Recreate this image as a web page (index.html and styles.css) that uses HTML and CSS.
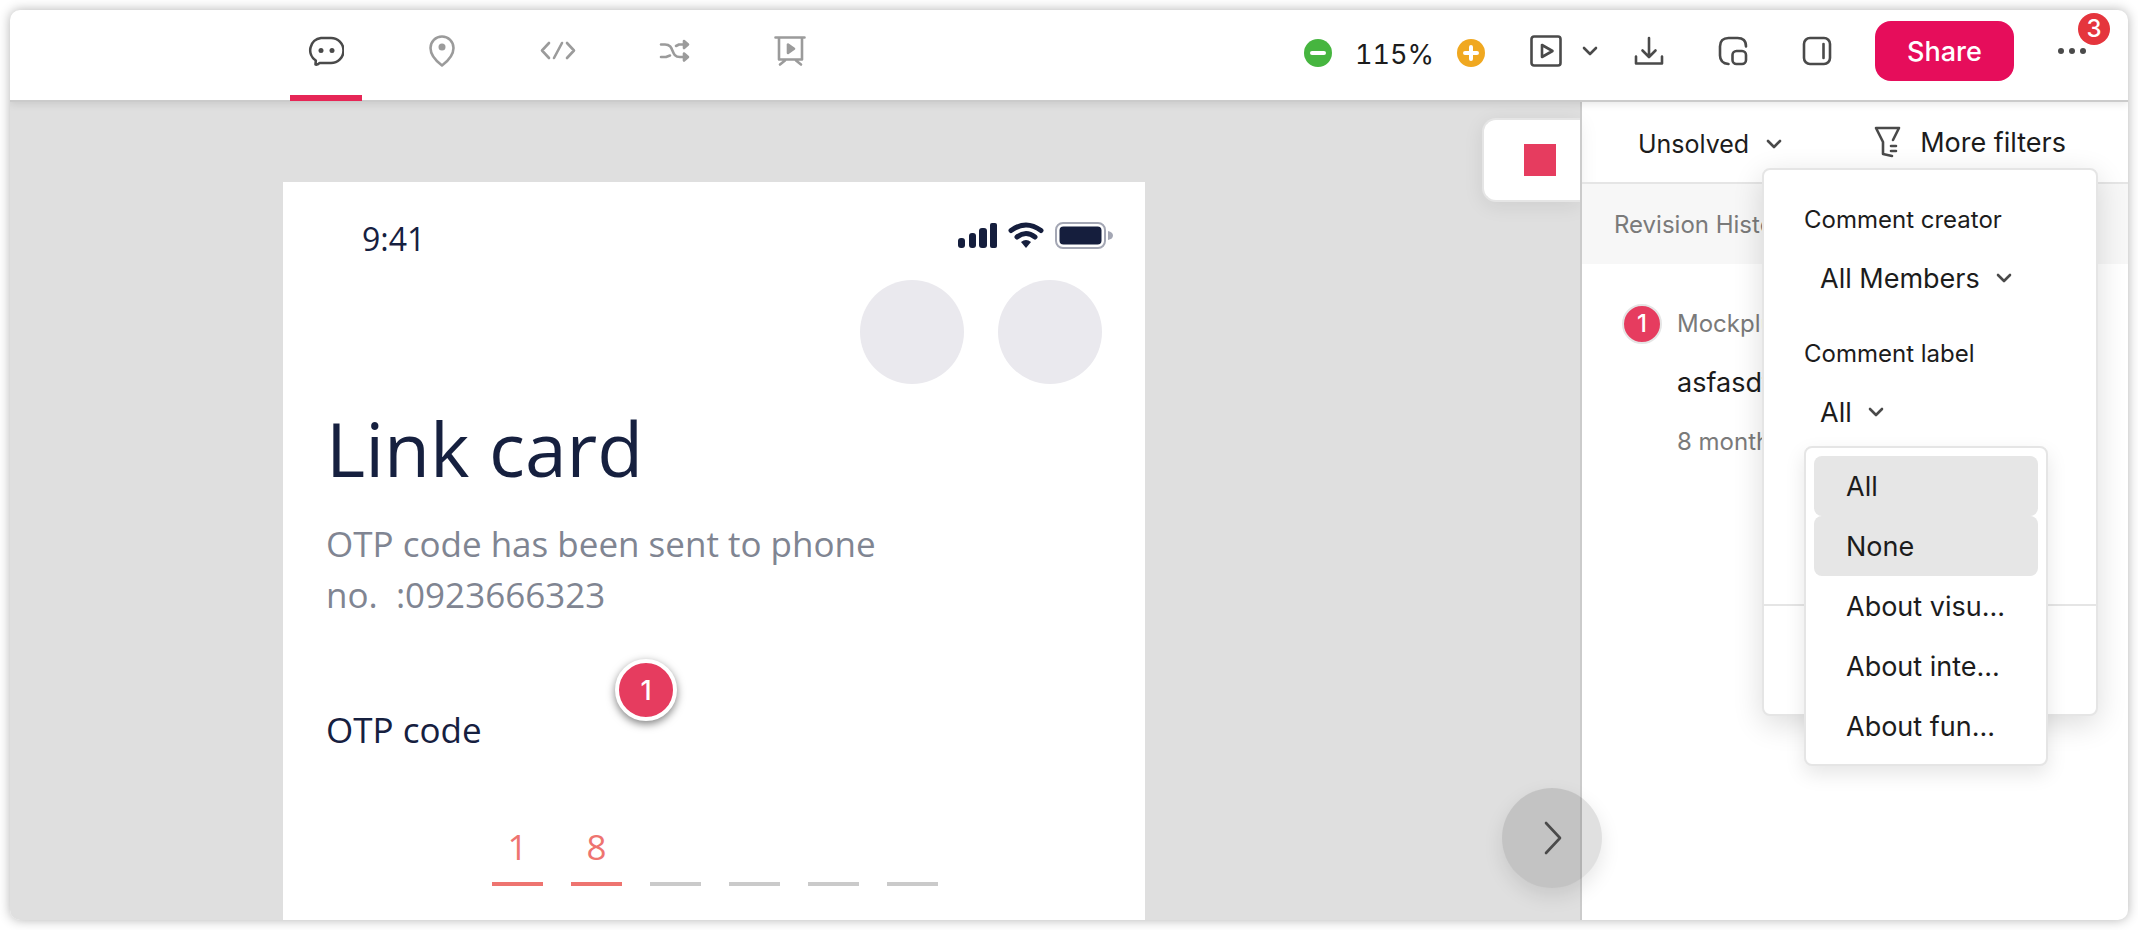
FILE: index.html
```html
<!DOCTYPE html>
<html lang="en">
<head>
  <meta charset="UTF-8" />
  <meta name="viewport" content="width=device-width, initial-scale=1.0"/>
  <title>Link card - Comments</title>
  <link rel="stylesheet" href="styles.css">
</head>
<body>
  <div class="window">
    <header class="toolbar">
      <nav class="tabs">
        <button class="tab active" aria-label="Comments">
          <svg class="icon" viewBox="0 0 36 36">
            <path d="M13 5h10a12.300 12.300 0 0 1 0 25H11.500q-1.500 2-4 1.500l.3-4A12.300 12.300 0 0 1 13 5z"/>
            <circle class="dot" cx="13" cy="17.500" r="2.500"/>
            <circle class="dot" cx="24" cy="17.500" r="2.500"/>
          </svg>
        </button>
        <button class="tab" aria-label="Pins">
          <svg class="icon" viewBox="0 0 36 36">
            <path d="M18 32.500C12 28 6.500 22 6.500 15a11.500 11.500 0 0 1 23 0C29.500 22 24 28 18 32.500z"/>
            <circle class="dot" cx="18" cy="14" r="3.500"/>
          </svg>
        </button>
        <button class="tab" aria-label="Code">
          <svg class="icon" viewBox="0 0 36 36">
            <path d="M9 10l-7 7.500L9 25M27 10l7 7.500-7 7.500M22 10l-8 15"/>
          </svg>
        </button>
        <button class="tab" aria-label="Flow">
          <svg class="icon" viewBox="0 0 36 36">
            <path d="M5 11.500h4c10 0 5 12.500 15 12.500h6M5 24h5l4-1.500M20 13l3-1.500h7"/>
            <path class="solid" d="M28 8l4 3.500-4 3.500zM28 20.500l4 3.500-4 3.500z"/>
          </svg>
        </button>
        <button class="tab" aria-label="Presentation">
          <svg class="icon" viewBox="0 0 36 36">
            <path d="M3.500 4.500h29M7 5v21.500h23V5M13 27.500l-5 4M24 27.500l5 4"/>
            <path class="solid" d="M16 11.500v8.500l6-4.200z"/>
          </svg>
        </button>
      </nav>

      <div class="zoom">
        <button class="zoom-btn zoom-out" aria-label="Zoom out">
          <svg viewBox="0 0 28 28"><path d="M8 14h12"/></svg>
        </button>
        <span class="zoom-value">115%</span>
        <button class="zoom-btn zoom-in" aria-label="Zoom in">
          <svg viewBox="0 0 28 28"><path d="M8 14h12M14 8v12"/></svg>
        </button>
      </div>

      <div class="actions">
        <div class="play">
          <button class="icon-btn" aria-label="Preview">
            <svg viewBox="0 0 32 32">
              <rect x="1.500" y="1.500" width="29" height="29" rx="2.500"/>
              <path d="M12 10v12l10.500-6z"/>
            </svg>
          </button>
          <button class="chevron-btn" aria-label="Preview options">
            <svg class="chevron" viewBox="0 0 16 16"><path d="M2 5l6 6 6-6"/></svg>
          </button>
        </div>
        <button class="icon-btn" aria-label="Download">
          <svg viewBox="0 0 32 32"><path d="M16 3v18.500M9.500 15.500l6.500 6.500 6.500-6.500M3 21.500v7h26v-7"/></svg>
        </button>
        <button class="icon-btn" aria-label="Floating window">
          <svg viewBox="0 0 32 32">
            <path d="M29 11.500c0-6-3-8.500-8.500-8.500h-9C6 3 3 6 3 11.500v9c0 4.500 2.500 8 8.500 8.500"/>
            <rect x="15.500" y="16" width="13.500" height="13" rx="4"/>
          </svg>
        </button>
        <button class="icon-btn" aria-label="Side panel">
          <svg viewBox="0 0 32 32">
            <rect x="3" y="3" width="26" height="26" rx="6"/>
            <path d="M22.500 9v14"/>
          </svg>
        </button>
      </div>

      <button class="share">Share</button>

      <button class="icon-btn more" aria-label="More">
        <svg viewBox="0 0 32 32">
          <circle class="dot" cx="5" cy="16" r="3"/>
          <circle class="dot" cx="16" cy="16" r="3"/>
          <circle class="dot" cx="27" cy="16" r="3"/>
        </svg>
        <span class="badge">3</span>
      </button>
    </header>

    <div class="workspace">
      <main class="canvas">
        <section class="phone">
          <div class="status-bar">
            <span>9:41</span>
            <svg class="status-icons" viewBox="0 0 156 28">
              <rect x="1" y="17" width="7" height="10" rx="3"/>
              <rect x="12" y="12" width="7" height="15" rx="3"/>
              <rect x="22" y="7" width="8" height="20" rx="3"/>
              <rect x="33" y="2" width="7" height="25" rx="2"/>
              <path class="wave" d="M54 9.500q15-11 30 0M60 16q9-7 18 0"/>
              <path d="M64 21q5-4 10 0l-5 6z"/>
              <rect class="battery" x="99" y="2" width="49" height="25" rx="7"/>
              <rect x="102.500" y="5.500" width="42" height="18" rx="4"/>
              <path class="nub" d="M151 10q5 1 5 4.500t-5 4.500z"/>
            </svg>
          </div>
          <div class="avatars">
            <span class="avatar"></span>
            <span class="avatar"></span>
          </div>
          <h1>Link card</h1>
          <p class="hint">OTP code has been sent to phone<br>no.&nbsp; :0923666323</p>
          <p class="field-name">OTP code</p>
          <div class="otp">
            <input class="filled" aria-label="Digit 1" value="1">
            <input class="filled" aria-label="Digit 2" value="8">
            <input aria-label="Digit 3">
            <input aria-label="Digit 4">
            <input aria-label="Digit 5">
            <input aria-label="Digit 6">
          </div>
          <button class="marker">1</button>
        </section>
        <div class="color-tag"><span class="swatch"></span></div>
        <button class="collapse" aria-label="Collapse panel">
          <svg viewBox="0 0 32 36"><path d="M10 3l14 15-14 15"/></svg>
        </button>
      </main>

      <aside class="panel">
        <div class="panel-head">
          <label class="picker status">
            <select aria-label="Status"><option>Unsolved</option></select>
            <svg class="chevron" viewBox="0 0 16 16"><path d="M2 5l6 6 6-6"/></svg>
          </label>
          <button class="more-filters">
            <svg viewBox="0 0 28 32">
              <path d="M19 14l6-12H2l7 14v12l9 2M17 20h5M17 25h5"/>
            </svg>
            More filters
          </button>
        </div>
        <div class="revision">Revision History</div>
        <article class="comment">
          <span class="pin">1</span>
          <div class="comment-text">
            <p class="author">Mockplus</p>
            <p class="message">asfasdf</p>
            <p class="date">8 months ago</p>
          </div>
        </article>

        <div class="filters">
          <div class="filters-body">
            <label class="filter-name" for="creator">Comment creator</label>
            <div class="picker">
              <select id="creator"><option>All Members</option></select>
              <svg class="chevron" viewBox="0 0 16 16"><path d="M2 5l6 6 6-6"/></svg>
            </div>
            <label class="filter-name" for="label">Comment label</label>
            <div class="picker">
              <button id="label" class="picker-btn" aria-haspopup="listbox" aria-expanded="true">All</button>
              <svg class="chevron" viewBox="0 0 16 16"><path d="M2 5l6 6 6-6"/></svg>
              <ul class="menu" role="listbox">
                <li class="selected" role="option">All</li>
                <li class="selected" role="option">None</li>
                <li role="option">About visu...</li>
                <li role="option">About inte...</li>
                <li role="option">About fun...</li>
              </ul>
            </div>
          </div>
          <div class="filters-footer"></div>
        </div>
      </aside>
    </div>
  </div>
</body>
</html>
```
FILE: styles.css
```css
:root {
  --accent: #e60d5b;
  --pin: #e63c5f;
  --text: #1c1c1c;
  --muted: #7a7a7a;
  --icon: #4a4a4a;
  --icon-muted: #9b9b9b;
  --line: #e5e5e5;
  --line-strong: #cbcbcb;
  --navy: #16203f;
  --coral: #ee7470;
}

* {
  margin: 0;
  padding: 0;
  box-sizing: border-box;
}

body {
  font-family: Inter, "Liberation Sans", sans-serif;
  font-size: 24px;
  color: var(--text);
  background: #fff;
  height: 100vh;
  padding: 10px;
}

button,
select,
input {
  font: inherit;
  color: inherit;
  background: none;
  border: none;
  outline: none;
}

button,
select {
  cursor: pointer;
}

svg {
  display: block;
  fill: none;
  stroke: var(--icon);
  stroke-width: 2.6;
  stroke-linecap: round;
  stroke-linejoin: round;
}

.window {
  height: 100%;
  display: flex;
  flex-direction: column;
  background: #fff;
  border-radius: 10px;
  box-shadow: 0 0 12px rgba(0, 0, 0, 0.3);
  overflow: hidden;
}

/* Toolbar */
.toolbar {
  position: relative;
  z-index: 2;
  height: 92px;
  flex: none;
  display: flex;
  align-items: center;
  padding: 0 40px 8px 280px;
  border-bottom: 2px solid var(--line-strong);
  box-shadow: 0 2px 8px rgba(0, 0, 0, 0.1);
}

.tabs {
  display: flex;
  gap: 44px;
}

.tab {
  position: relative;
  width: 72px;
  height: 82px;
  display: flex;
  align-items: center;
  justify-content: center;
}

.icon {
  width: 36px;
  height: 36px;
  stroke: var(--icon-muted);
}

.icon .dot,
.icon .solid {
  fill: var(--icon-muted);
}

.icon .dot {
  stroke: none;
}

.tab.active .icon {
  stroke: var(--icon);
}

.tab.active .dot {
  fill: var(--icon);
}

.tab.active::after {
  content: "";
  position: absolute;
  left: 0;
  right: 0;
  bottom: -9px;
  height: 6px;
  background: #e62656;
}

.zoom {
  display: flex;
  align-items: center;
  gap: 23px;
  margin-left: auto;
  padding-top: 4px;
}

.zoom-btn {
  width: 28px;
  height: 28px;
  border-radius: 50%;
}

.zoom-btn svg {
  stroke: #fff;
  stroke-width: 4;
}

.zoom-out {
  background: #46b53f;
}

.zoom-in {
  background: #f0a820;
}

.zoom-value {
  font-size: 27px;
  font-variant-numeric: tabular-nums;
  padding-top: 2px;
}

.actions {
  display: flex;
  align-items: center;
  gap: 52px;
  margin: 0 42px 0 45px;
}

.play {
  display: flex;
  align-items: center;
  gap: 20px;
  margin-right: -17px;
}

.icon-btn {
  width: 32px;
  height: 32px;
}

.chevron {
  width: 16px;
  height: 16px;
  flex: none;
}

.share {
  width: 139px;
  height: 60px;
  border-radius: 16px;
  background: var(--accent);
  color: #fff;
  font-size: 27px;
  font-weight: 500;
}

.more {
  position: relative;
  margin-left: 42px;
}

.more .dot {
  fill: var(--icon);
  stroke: none;
}

.badge {
  position: absolute;
  top: -22px;
  right: -22px;
  width: 32px;
  height: 32px;
  border-radius: 50%;
  background: #e5353d;
  color: #fff;
  font-size: 24px;
  font-weight: 500;
  line-height: 32px;
}

/* Canvas */
.workspace {
  flex: 1;
  min-height: 0;
  display: flex;
}

.canvas {
  position: relative;
  flex: 1;
  min-width: 0;
  background: #dfdfdf;
  padding: 80px 0 0 273px;
}

.phone {
  position: relative;
  width: 862px;
  height: 100%;
  padding: 36px 32px 0 43px;
  background: #fff;
  color: var(--navy);
  font-family: "Open Sans", "Noto Sans", sans-serif;
  font-size: 35px;
}

.status-bar {
  height: 40px;
  display: flex;
  align-items: center;
  justify-content: space-between;
  padding-left: 36px;
  font-size: 32px;
}

.status-icons {
  width: 156px;
  height: 28px;
  fill: #151e3d;
  stroke: none;
  margin-bottom: 6px;
}

.status-icons .wave {
  fill: none;
  stroke: #151e3d;
  stroke-width: 5;
}

.status-icons .battery {
  fill: none;
  stroke: #a4a7b4;
  stroke-width: 2;
}

.status-icons .nub {
  fill: #a4a7b4;
}

.avatars {
  display: flex;
  justify-content: flex-end;
  gap: 34px;
  padding: 22px 11px 0 0;
}

.avatar {
  width: 104px;
  height: 104px;
  border-radius: 50%;
  background: #eae9ee;
}

.phone h1 {
  font-size: 75px;
  font-weight: 400;
  line-height: 100px;
  margin-top: 14px;
}

.hint {
  margin-top: 20px;
  line-height: 51px;
  color: #808592;
}

.field-name {
  margin-top: 84px;
  line-height: 51px;
}

.otp {
  display: flex;
  gap: 28px;
  margin: 63px 0 0 166px;
}

.otp input {
  width: 51px;
  height: 68px;
  padding-bottom: 8px;
  border-bottom: 4px solid #cacaca;
  text-align: center;
}

.otp .filled {
  color: var(--coral);
  border-color: var(--coral);
}

.marker {
  position: absolute;
  left: 332px;
  top: 477px;
  width: 62px;
  height: 62px;
  border: 4px solid #fff;
  border-radius: 50%;
  background: var(--pin);
  box-shadow: 0 3px 8px rgba(0, 0, 0, 0.5);
  color: #fff;
  font-family: Inter, sans-serif;
  font-size: 27px;
  font-weight: 500;
}

.color-tag {
  position: absolute;
  top: 16px;
  right: 0;
  width: 98px;
  height: 84px;
  padding: 24px 0 0 40px;
  border: 2px solid var(--line);
  border-right: none;
  border-radius: 14px 0 0 14px;
  background: #fff;
  box-shadow: 0 4px 20px rgba(0, 0, 0, 0.08);
}

.swatch {
  display: block;
  width: 32px;
  height: 32px;
  background: var(--pin);
}

.collapse {
  position: absolute;
  z-index: 1;
  right: -22px;
  bottom: 32px;
  width: 100px;
  height: 100px;
  border-radius: 50%;
  background: rgba(0, 0, 0, 0.12);
  box-shadow: 0 8px 20px rgba(0, 0, 0, 0.1);
}

.collapse svg {
  width: 32px;
  height: 36px;
  margin: 0 auto;
}

/* Comments panel */
.panel {
  position: relative;
  width: 548px;
  flex: none;
  border-left: 2px solid var(--line-strong);
}

.panel-head {
  height: 82px;
  display: flex;
  align-items: center;
  justify-content: space-between;
  padding: 0 62px 0 56px;
  border-bottom: 2px solid var(--line);
}

.picker {
  position: relative;
  display: flex;
  align-items: center;
  gap: 16px;
  height: 40px;
  font-size: 27px;
}

.picker select {
  appearance: none;
}

.status {
  font-size: 25px;
  padding-top: 4px;
}

.more-filters {
  display: flex;
  align-items: center;
  gap: 18px;
  font-size: 27px;
}

.more-filters svg {
  width: 28px;
  height: 32px;
}

.revision {
  height: 80px;
  padding-left: 32px;
  background: #f7f7f7;
  color: var(--muted);
  line-height: 82px;
}

.comment {
  display: flex;
  gap: 15px;
  padding: 40px 30px 0 40px;
}

.pin {
  width: 40px;
  height: 40px;
  flex: none;
  border: 2px solid var(--line);
  border-radius: 50%;
  background: var(--pin);
  color: #fff;
  font-weight: 500;
  line-height: 36px;
  text-align: center;
}

.comment-text {
  display: grid;
  gap: 23px;
  padding-top: 2px;
  line-height: 36px;
}

.message {
  font-size: 27px;
}

.author,
.date {
  color: var(--muted);
}

/* Filters popup */
.filters {
  position: absolute;
  top: 66px;
  right: 30px;
  width: 336px;
  border: 2px solid var(--line);
  border-radius: 8px;
  background: #fff;
  box-shadow: 0 8px 30px rgba(0, 0, 0, 0.14);
}

.filters-body {
  padding: 32px 40px 136px;
}

.filter-name {
  display: block;
  line-height: 36px;
}

.filters-body .picker {
  margin: 20px 0 38px;
  padding-left: 16px;
}

.filters-body .picker:last-child {
  margin-bottom: 36px;
}

.filters-footer {
  height: 110px;
  border-top: 2px solid var(--line);
}

.menu {
  position: absolute;
  top: 54px;
  left: 0;
  width: 244px;
  height: 320px;
  padding: 8px;
  border: 2px solid var(--line);
  border-radius: 8px;
  background: #fff;
  box-shadow: 0 8px 20px rgba(0, 0, 0, 0.1);
  list-style: none;
}

.menu li {
  height: 60px;
  padding-left: 32px;
  border-radius: 8px;
  line-height: 61px;
  white-space: nowrap;
}

.menu .selected {
  background: #e6e6e6;
}
```
